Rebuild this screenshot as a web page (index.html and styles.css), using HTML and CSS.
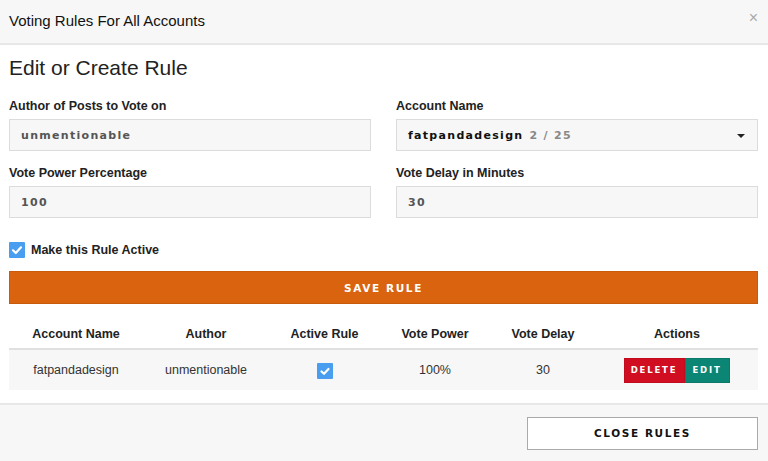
FILE: index.html
```html
<!DOCTYPE html>
<html>
<head>
<meta charset="utf-8">
<link rel="stylesheet" href="styles.css">
</head>
<body>
<div class="modal">
  <div class="modal-header">
    <div class="modal-title">Voting Rules For All Accounts</div>
    <div class="close-x">×</div>
  </div>
  <div class="modal-body">
    <h2 class="section-title">Edit or Create Rule</h2>
    <div class="form-grid">
      <div class="field">
        <label class="label">Author of Posts to Vote on</label>
        <div class="input muted">unmentionable</div>
      </div>
      <div class="field">
        <label class="label">Account Name</label>
        <div class="input select"><span class="strong">fatpandadesign</span><span class="count">2 / 25</span><span class="caret"></span></div>
      </div>
      <div class="field">
        <label class="label">Vote Power Percentage</label>
        <div class="input muted">100</div>
      </div>
      <div class="field">
        <label class="label">Vote Delay in Minutes</label>
        <div class="input muted">30</div>
      </div>
    </div>
    <div class="check-row">
      <span class="checkbox big"><svg viewBox="0 0 16 16" width="16" height="16"><path d="M4 8.3 L6.8 11 L12 5.3" fill="none" stroke="#fff" stroke-width="2.2" stroke-linecap="round" stroke-linejoin="round"/></svg></span>
      <span class="check-label">Make this Rule Active</span>
    </div>
    <button class="save-btn">SAVE RULE</button>
    <table class="rules">
      <thead>
        <tr>
          <th class="c1">Account Name</th>
          <th class="c2">Author</th>
          <th class="c3">Active Rule</th>
          <th class="c4">Vote Power</th>
          <th class="c5">Vote Delay</th>
          <th class="c6">Actions</th>
        </tr>
      </thead>
      <tbody>
        <tr>
          <td>fatpandadesign</td>
          <td>unmentionable</td>
          <td><span class="checkbox small"><svg viewBox="0 0 16 16" width="16" height="16"><path d="M4.5 8.5 L7 10.8 L11.5 6" fill="none" stroke="#fff" stroke-width="2.2" stroke-linecap="round" stroke-linejoin="round"/></svg></span></td>
          <td>100%</td>
          <td>30</td>
          <td><div class="actions"><button class="btn-del">DELETE</button><button class="btn-edit">EDIT</button></div></td>
        </tr>
      </tbody>
    </table>
  </div>
  <div class="modal-footer">
    <button class="close-btn">CLOSE RULES</button>
  </div>
</div>
</body>
</html>
```

FILE: styles.css
```css
* { box-sizing: border-box; }
html, body { margin: 0; padding: 0; background: #fff; }
body { font-family: "Liberation Sans", Arial, sans-serif; color: #222; width: 768px; height: 461px; overflow: hidden; }

.modal { display: flex; flex-direction: column; height: 461px; }

.modal-header {
  height: 45px;
  background: #f7f7f7;
  border-bottom: 2px solid #e8e8e8;
  display: flex; align-items: center; justify-content: space-between;
  padding: 0 9px 3px 9px;
}
.modal-title { font-size: 15px; color: #111; }
.close-x { font-size: 16px; color: #aaa; line-height: 1; margin-top: -4px; margin-right: 1px; }

.modal-body { padding: 0 10px 0 9px; flex: 1; }
.section-title { font-size: 21px; font-weight: normal; margin: 11px 0 0 0; line-height: 24px; color: #222; }

.form-grid { display: grid; grid-template-columns: 362px 362px; column-gap: 25px; row-gap: 14px; margin-top: 18px; }
.field { display: flex; flex-direction: column; }
.label { font-size: 12.5px; font-weight: bold; color: #222; line-height: 16px; margin-bottom: 5px; }
.input {
  height: 32px; background: #f7f7f7; border: 1px solid #dcdcdc;
  display: flex; align-items: center; padding: 0 11px;
  font-family: "DejaVu Sans", sans-serif; font-weight: bold; font-size: 11px; letter-spacing: 1.3px;
}
.input.muted { color: #555; }
.select { position: relative; }
.select .strong { color: #111; }
.select .count { color: #888; margin-left: 6px; }
.caret { position: absolute; right: 12px; top: 14px; width: 0; height: 0; border-left: 4px solid transparent; border-right: 4px solid transparent; border-top: 4px solid #222; }

.check-row { display: flex; align-items: center; margin-top: 24px; height: 16px; }
.checkbox { display: inline-flex; align-items: center; justify-content: center; background: #4a9ef0; border-radius: 1px; }
.checkbox.big { width: 16px; height: 16px; }
.checkbox.small { width: 16px; height: 16px; }
.check-label { font-size: 12.5px; font-weight: bold; margin-left: 6px; color: #222; }

.save-btn {
  display: block; width: 749px; height: 33px; margin-top: 13px;
  background: #da630f; border: 1px solid #c85a0c; color: #fff;
  font-family: "DejaVu Sans", sans-serif; font-weight: bold; font-size: 10.5px; letter-spacing: 1.6px;
  cursor: pointer;
}

.rules { width: 749px; border-collapse: collapse; margin-top: 10px; table-layout: fixed; }
.rules th { font-size: 12.5px; font-weight: bold; color: #222; height: 35px; text-align: center; padding: 5px 0 0 0; vertical-align: middle; border-bottom: 2px solid #e0e0e0; }
.rules th.c1 { width: 134px; }
.rules th.c2 { width: 126px; }
.rules th.c3 { width: 111px; }
.rules th.c4 { width: 110px; }
.rules th.c5 { width: 106px; }
.rules th.c6 { width: 162px; }
.rules td { background: #f7f7f7; height: 41px; text-align: center; font-size: 12.5px; color: #333; padding: 0; vertical-align: middle; }
.rules td .checkbox { vertical-align: middle; margin-top: 2px; }

.actions { display: flex; justify-content: center; margin-left: -1px; }
.btn-del, .btn-edit {
  height: 25px; border: 1px solid rgba(0,0,0,0.08); color: #fff;
  font-family: "DejaVu Sans", sans-serif; font-weight: bold; font-size: 8.5px; letter-spacing: 1.8px; padding: 0;
}
.btn-del { background: #d10e21; width: 61px; }
.btn-edit { background: #0b8674; width: 45px; }

.modal-footer {
  height: 58px; background: #f7f7f7; border-top: 2px solid #e8e8e8;
  display: flex; align-items: center; justify-content: flex-end; padding: 0 10px 0 0;
}
.close-btn {
  width: 231px; height: 33px; background: #fff; border: 1px solid #aaa; color: #111;
  font-family: "DejaVu Sans", sans-serif; font-weight: bold; font-size: 10.5px; letter-spacing: 1.6px;
}
```
